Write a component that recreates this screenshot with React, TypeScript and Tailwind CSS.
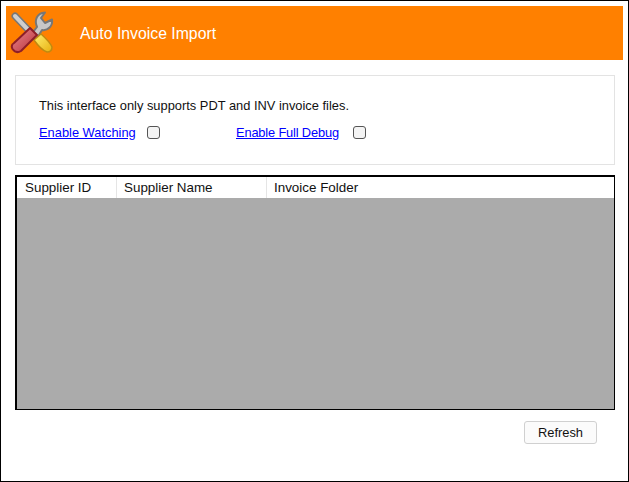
export default function App() {
  return (
    <div className="w-[629px] h-[482px] bg-white border border-black font-['Liberation_Sans',sans-serif] text-[12.87px] text-[#111] flex flex-col pt-[5px] px-[5px] overflow-hidden">
      <div className="h-[54px] bg-[#ff8000] flex items-center shrink-0">
        <svg width="46" height="46" viewBox="10 10 46 46" className="ml-[4px] shrink-0">
          <defs>
            <linearGradient id="red" x1="0" y1="0" x2="1" y2="1">
              <stop offset="0" stopColor="#ea8a90" />
              <stop offset="1" stopColor="#b8303a" />
            </linearGradient>
            <linearGradient id="yel" x1="0" y1="0" x2="1" y2="1">
              <stop offset="0" stopColor="#fff070" />
              <stop offset="1" stopColor="#e8b010" />
            </linearGradient>
          </defs>
          <path d="M15 16 L34 36" stroke="#777" strokeWidth="7" strokeLinecap="round" />
          <path d="M15 16 L34 36" stroke="#cfcfcf" strokeWidth="4" strokeLinecap="round" />
          <path d="M30 36 L37 27 C34 20 37 13 45 12.5 L41 18 L45 23 L52 19.5 C53 26 48 31 42 30 L36 40 Z" fill="#c8c8c8" stroke="#777" strokeWidth="2" strokeLinejoin="round" />
          <path d="M34 40 L41 34 Q50 42 52 47 Q52 52 47 52 Q41 50 34 40 Z" fill="url(#yel)" stroke="#c08a10" strokeWidth="1.5" strokeLinejoin="round" />
          <path d="M30 28 L37 35 L21 51 Q16 54 12.5 49 Q10.5 45 14 43 Z" fill="url(#red)" stroke="#8e1f28" strokeWidth="2" strokeLinejoin="round" />
        </svg>
        <span className="ml-[24px] mt-[1px] text-white text-[15.8px] whitespace-nowrap">Auto Invoice Import</span>
      </div>
      <div className="mt-[15px] ml-[9px] mr-[8px] h-[90px] border border-[#e3e3e3] shrink-0 flex flex-col pl-[23px]">
        <div className="mt-[21px] h-[17px] leading-[17px] whitespace-nowrap">This interface only supports PDT and INV invoice files.</div>
        <div className="mt-[10px] flex items-center h-[17px]">
          <a className="text-[#0000ff] underline w-[97px] whitespace-nowrap">Enable Watching</a>
          <span className="ml-[11px] w-[13px] h-[13px] rounded-[3px] border border-[#555] bg-[#f4f4f4]" />
          <a className="ml-[76px] text-[#0000ff] underline w-[104px] whitespace-nowrap tracking-[-0.17px]">Enable Full Debug</a>
          <span className="ml-[13px] w-[13px] h-[13px] rounded-[3px] border border-[#555] bg-[#f4f4f4]" />
        </div>
      </div>
      <div className="mt-[10px] ml-[9px] mr-[8px] h-[235px] border border-l-2 border-t-2 border-black bg-[#ababab] shrink-0 flex flex-col">
        <div className="h-[21px] bg-white flex items-center shrink-0 text-[13.4px]">
          <div className="w-[100px] h-full pl-[8px] leading-[21px] border-r border-[#e5e5e5] whitespace-nowrap">Supplier ID</div>
          <div className="w-[150px] h-full pl-[7px] leading-[21px] border-r border-[#e5e5e5] whitespace-nowrap">Supplier Name</div>
          <div className="pl-[7px] leading-[21px] whitespace-nowrap">Invoice Folder</div>
        </div>
      </div>
      <div className="mt-[11px] flex justify-end pr-[26px]">
        <button className="w-[73px] h-[23px] rounded-[3px] border border-[#d0d0d0] bg-[#fbfbfb] text-[12.87px]">Refresh</button>
      </div>
    </div>
  );
}
